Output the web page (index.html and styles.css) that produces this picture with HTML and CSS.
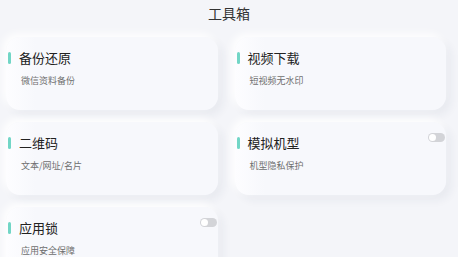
FILE: index.html
```html
<!DOCTYPE html>
<html lang="zh-CN">
<head>
  <meta charset="UTF-8" />
  <meta name="viewport" content="width=device-width, initial-scale=1.0"/>
  <title>工具箱</title>
  <link rel="stylesheet" href="styles.css">
</head>
<body>

  <h1 class="page-title">工具箱</h1>

  <div class="tools">
    <div class="card">
      <div class="card-head"><span class="bar"></span><span class="name">备份还原</span></div>
      <div class="desc">微信资料备份</div>
    </div>
    <div class="card">
      <div class="card-head"><span class="bar"></span><span class="name">视频下载</span></div>
      <div class="desc">短视频无水印</div>
    </div>
    <div class="card">
      <div class="card-head"><span class="bar"></span><span class="name">二维码</span></div>
      <div class="desc">文本/网址/名片</div>
    </div>
    <div class="card">
      <div class="card-head"><span class="bar"></span><span class="name">模拟机型</span><span class="switch"></span></div>
      <div class="desc">机型隐私保护</div>
    </div>
    <div class="card">
      <div class="card-head"><span class="bar"></span><span class="name">应用锁</span><span class="switch"></span></div>
      <div class="desc">应用安全保障</div>
    </div>
  </div>

</body>
</html>
```

FILE: styles.css
```css
body {
  margin: 0;
  font-family: "Noto Sans CJK SC", "Noto Sans", sans-serif;
  background-color: #f4f5f9;
  overflow: hidden;
}

.page-title {
  margin: 0 0 9px;
  height: 28px;
  line-height: 26px;
  font-size: 14px;
  font-weight: 400;
  color: #333;
  text-align: center;
}

.tools {
  display: grid;
  grid-template-columns: 1fr 1fr;
  column-gap: 17px;
  row-gap: 12px;
  padding: 0 12px 0 6px;
}

.card {
  height: 73px;
  box-sizing: border-box;
  padding: 14px 1px 0 2px;
  border-radius: 14px;
  background: linear-gradient(to right, #fdfdff, #f7f8fc 14%);
  box-shadow: -3px -3px 8px #ffffff, 5px 5px 10px rgba(40, 50, 90, 0.06);
}

.card-head {
  display: flex;
  align-items: center;
  gap: 8px;
  height: 14px;
}

.bar {
  width: 3px;
  height: 12px;
  border-radius: 2px;
  background-color: #72d6c6;
}

.name {
  font-size: 13px;
  line-height: 14px;
  color: #222;
}

.switch {
  margin-left: auto;
  align-self: flex-start;
  margin-top: -3px;
  width: 17px;
  height: 9px;
  border-radius: 5px;
  background-color: #d3d4d8;
  display: flex;
  align-items: center;
  padding-left: 1px;
  box-sizing: border-box;
}

.switch::after {
  content: "";
  width: 7px;
  height: 7px;
  border-radius: 50%;
  background-color: #fff;
}

.desc {
  margin: 10px 0 0 13px;
  font-size: 9px;
  line-height: 11px;
  color: #6f6f6f;
}
```
